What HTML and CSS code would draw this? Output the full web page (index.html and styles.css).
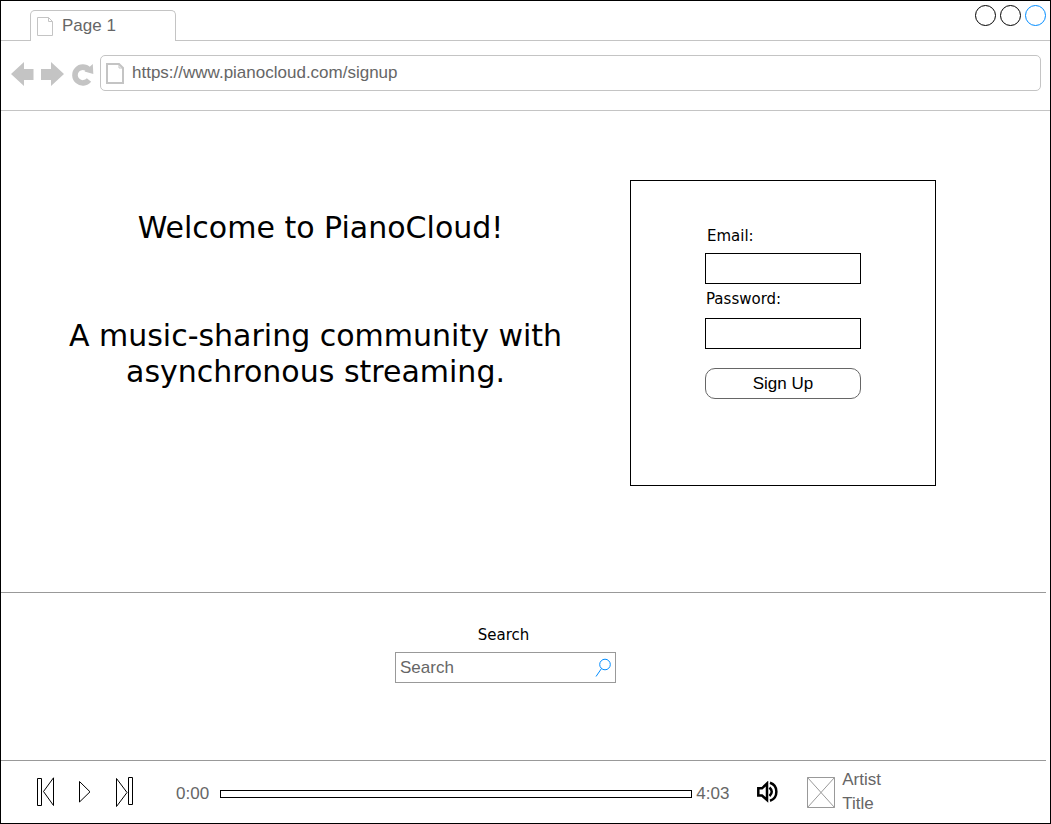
FILE: index.html
```html
<!DOCTYPE html>
<html lang="en">
<head>
<meta charset="utf-8">
<title>PianoCloud</title>
<link rel="stylesheet" href="styles.css">
</head>
<body>
<div class="window">
  <header class="tabs">
    <div class="tab">
      <svg class="tab-icon" width="16" height="19" viewBox="0 0 16 19" fill="none" stroke="#c4c4c4"><path d="M.5.5H11.5L15.5 4.5V18.5H.5ZM11.5.5V4.5H15.5"/></svg>
      <span>Page 1</span>
    </div>
    <div class="window-buttons">
      <button class="dot" aria-label="Minimize"></button>
      <button class="dot" aria-label="Maximize"></button>
      <button class="dot dot-close" aria-label="Close"></button>
    </div>
  </header>
  <nav class="toolbar">
    <button class="tool" aria-label="Back"><svg width="23" height="26" viewBox="0 0 23 26" fill="#c4c4c4"><path d="M0 13 13 1V8H22.500V19H13V25Z"/></svg></button>
    <button class="tool" aria-label="Forward"><svg width="23" height="26" viewBox="0 0 23 26" fill="#c4c4c4"><path d="M23 13 10 1V8H0V19H10V25Z"/></svg></button>
    <button class="tool" aria-label="Reload"><svg width="23" height="26" viewBox="0 0 23 26"><path d="M17.500 8.500A7.900 7.900 0 1 0 18 19" fill="none" stroke="#c4c4c4" stroke-width="5.600"/><path d="M21.800 3 22.300 13 13.500 10.500Z" fill="#c4c4c4"/></svg></button>
    <div class="address">
      <svg width="18" height="21" viewBox="0 0 18 21" fill="none" stroke="#c4c4c4" stroke-width="2"><path d="M1 1H13L17 5V20H1Z"/><path d="M13 1V5H17" stroke-width="1"/></svg>
      <input class="url" aria-label="Address" value="https://www.pianocloud.com/signup">
    </div>
  </nav>
  <main class="page">
    <section class="hero">
      <div class="intro">
        <h1>Welcome to PianoCloud!</h1>
        <p>A music-sharing community with asynchronous streaming.</p>
      </div>
      <form class="signup">
        <label class="email-label" for="email">Email:</label>
        <input id="email" type="email">
        <label class="password-label" for="password">Password:</label>
        <input id="password" type="password">
        <button type="button">Sign Up</button>
      </form>
    </section>
    <section class="search">
      <label for="search">Search</label>
      <div class="search-box">
        <input id="search" placeholder="Search">
        <svg width="16" height="19" viewBox="0 0 16 19" fill="none" stroke="#008cff"><circle cx="10" cy="6.500" r="5.300"/><path d="M6.500 10.500 1 18.500"/></svg>
      </div>
    </section>
    <footer class="player">
      <div class="controls">
        <button aria-label="Previous"><svg width="19" height="30" viewBox="0 0 19 30"><path d="M1.500 1.500H5.500V28.500H1.500ZM17.500 .8V28.500L7.500 14.500Z"/></svg></button>
        <button aria-label="Play"><svg width="12" height="30" viewBox="0 0 12 30"><path d="M.5 4.500V25L11 14.800Z"/></svg></button>
        <button aria-label="Next"><svg width="19" height="30" viewBox="0 0 19 30"><path d="M13.500 .5H17.500V27.500H13.500ZM1.500 1.500V29.500L12 15.500Z"/></svg></button>
      </div>
      <span class="time">0:00</span>
      <div class="track"></div>
      <span class="time">4:03</span>
      <button class="volume" aria-label="Volume"><svg width="22" height="22" viewBox="0 0 22 22" fill="none" stroke="#000" stroke-width="2.500"><path d="M2.300 7.300H6L11 2.500V19L6 14.500H2.300Z"/><path d="M13.500 6.500Q18 10.800 13.500 15M14 1.800C22.500 4.500 22.500 17 14 19.800"/></svg></button>
      <svg class="cover" width="28" height="31" viewBox="0 0 28 31" fill="none" stroke="#999"><path d="M.5.5H27.500V30.500H.5ZL27.500 30.500M27.500.5.5 30.500"/></svg>
      <div class="song"><span>Artist</span><span>Title</span></div>
    </footer>
  </main>
</div>
</body>
</html>
```
FILE: styles.css
```css
* { box-sizing: border-box; }
body {
  margin: 0;
  background: #fff;
  color: #000;
  font: 17px/24px "Liberation Sans", Arial, sans-serif;
}
button { padding: 0; border: 0; background: none; font: inherit; color: inherit; }
input { font: inherit; color: inherit; background: #fff; border-radius: 0; min-width: 0; }
svg { display: block; flex: none; }
.window {
  display: flex;
  flex-direction: column;
  min-height: 100vh;
  border: 1px solid #000;
}
.tabs {
  display: flex;
  justify-content: space-between;
  align-items: flex-end;
  height: 40px;
  padding: 0 4px 0 29px;
  border-bottom: 1px solid #c4c4c4;
}
.tab {
  display: flex;
  gap: 9px;
  width: 146px;
  height: 31px;
  margin-bottom: -1px;
  padding: 3px 6px;
  border: 1px solid #c4c4c4;
  border-bottom: 0;
  border-radius: 5px 5px 0 0;
  background: #fff;
  color: #666;
}
.tab-icon { margin-top: 3px; }
.window-buttons { display: flex; gap: 4px; align-self: flex-start; padding-top: 4px; }
.dot { width: 21px; height: 21px; border: 1px solid #000; border-radius: 50%; }
.dot-close { border-color: #008cff; }
.toolbar {
  display: flex;
  align-items: center;
  gap: 7px;
  height: 70px;
  padding: 0 9px 3px 10px;
  border-bottom: 1px solid #c4c4c4;
}
.address {
  display: flex;
  align-items: center;
  gap: 8px;
  flex: 1;
  height: 36px;
  margin: 0 0 2px -1px;
  padding: 0 5px;
  border: 1px solid #c4c4c4;
  border-radius: 5px;
}
.url { flex: 1; padding: 0; border: 0; color: #666; }
.page { display: flex; flex-direction: column; flex: 1; }
.hero {
  display: flex;
  align-items: flex-start;
  flex: 1;
  margin-right: 4px;
  padding: 69px 110px 0 0;
  border-bottom: 1px solid #999;
}
.intro {
  flex: 1;
  padding: 30px 60px 0;
  text-align: center;
  font: 30px/36px "DejaVu Sans", Verdana, sans-serif;
}
.intro h1 { margin: 0 0 72px; padding-left: 10px; font: inherit; }
.intro p { margin: 0; }
.signup {
  display: flex;
  flex-direction: column;
  flex: none;
  padding: 44px 74px 86px;
  border: 1px solid #000;
}
.signup label, .search label { font: 15px/22px "DejaVu Sans", Verdana, sans-serif; }
.signup input { width: 156px; height: 31px; padding: 0 5px; border: 1px solid #000; }
.email-label { padding-left: 2px; margin-bottom: 6px; }
.password-label { padding-left: 1px; margin: 4px 0 8px; }
.signup button { height: 31px; margin-top: 19px; border: 1px solid #666; border-radius: 10px; }
.search {
  display: flex;
  flex-direction: column;
  align-items: center;
  gap: 6px;
  height: 168px;
  margin-right: 4px;
  padding: 31px 36px 0 0;
  border-bottom: 1px solid #999;
}
.search label { padding-right: 4px; }
.search-box {
  display: flex;
  align-items: center;
  width: 221px;
  height: 31px;
  padding: 0 4px;
  border: 1px solid #999;
}
.search-box input { flex: 1; padding: 0; border: 0; color: #666; }
.search-box input::placeholder { color: #666; opacity: 1; }
.player {
  display: flex;
  align-items: center;
  height: 62px;
  padding: 0 169px 0 35px;
  color: #666;
}
.controls { display: flex; gap: 24px; margin-right: 42px; }
.controls svg { fill: none; stroke: #000; }
.time { width: 34px; padding-top: 4px; }
.track { flex: 1; height: 8px; margin: 4px 4px 0 10px; border: 1px solid #000; }
.volume { margin: 0 29px 0 26px; }
.cover { margin-right: 7px; }
.song { display: flex; flex-direction: column; }
```
